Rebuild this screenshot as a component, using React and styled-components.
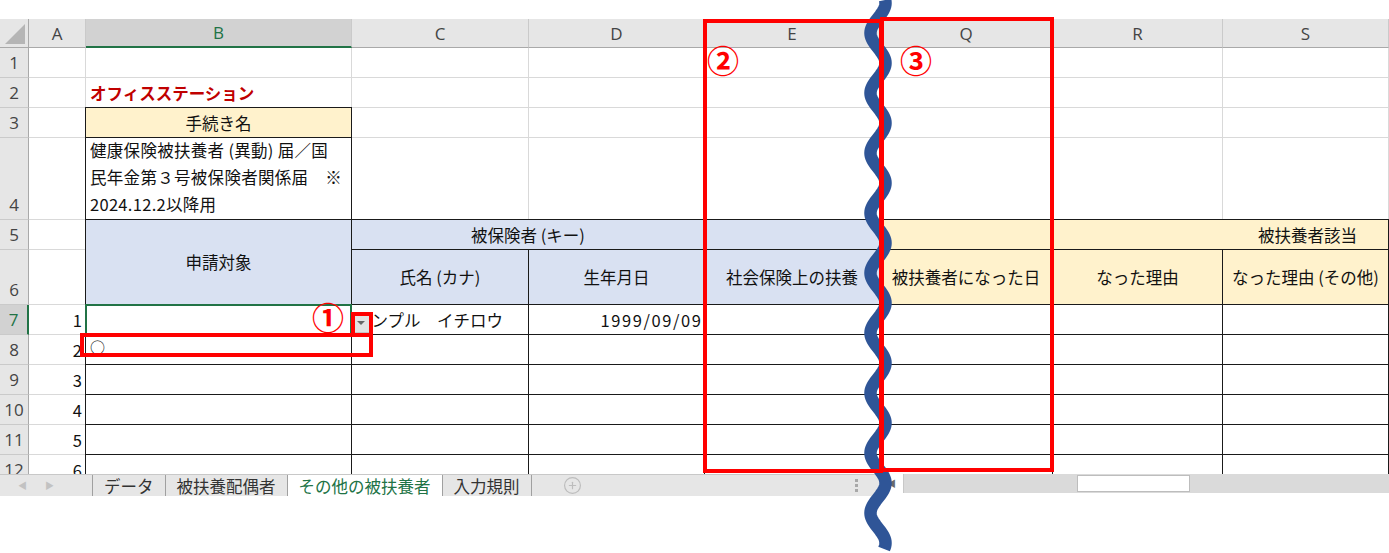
import React from 'react';
import styled, { createGlobalStyle, css } from 'styled-components';
import { CirclePlus } from 'lucide-react';

const GlobalStyle = createGlobalStyle`
  html, body {
    margin: 0;
    padding: 0;
    background: #fff;
  }
  body {
    font-family: "Noto Sans CJK JP", "Noto Sans", sans-serif;
  }
`;

const Page = styled.div`
  position: relative;
  width: 1389px;
  height: 553px;
  padding-top: 19px;
  box-sizing: border-box;
  overflow: hidden;
  background: #fff;
`;

const Viewport = styled.div`
  height: 455px;
  overflow: hidden;
`;

const Grid = styled.div`
  display: grid;
  grid-template-columns: 29px 57px 266px 177px 176px 175px 173px 170px 166px;
  grid-template-rows: 29px 30px 30px 30px 82px 30px 55px 30px 30px 30px 30px 30px 30px;
`;

const Corner = styled.div`
  position: relative;
  background: #e6e6e6;
  border-right: 1px solid #a9a9a9;
  border-bottom: 1px solid #a9a9a9;
  box-sizing: border-box;
`;

const CornerMark = styled.svg`
  position: absolute;
  right: 3px;
  bottom: 3px;
`;

const ColHead = styled.div`
  display: flex;
  align-items: center;
  justify-content: center;
  box-sizing: border-box;
  background: ${({ $active }) => ($active ? '#d2d2d2' : '#e6e6e6')};
  border-right: 1px solid #cacaca;
  border-bottom: ${({ $active }) => ($active ? '2px solid #217346' : '1px solid #a9a9a9')};
  color: ${({ $active }) => ($active ? '#217346' : '#444')};
  font-family: "Open Sans", "Noto Sans", sans-serif;
  font-size: 17px;
`;

const RowHead = styled.div`
  display: flex;
  align-items: flex-end;
  justify-content: center;
  padding-bottom: 3px;
  box-sizing: border-box;
  background: ${({ $active }) => ($active ? '#d2d2d2' : '#e6e6e6')};
  border-right: ${({ $active }) => ($active ? '2px solid #217346' : '1px solid #a9a9a9')};
  border-bottom: 1px solid #cacaca;
  color: ${({ $active }) => ($active ? '#217346' : '#444')};
  font-family: "Open Sans", "Noto Sans", sans-serif;
  font-size: 17px;
  line-height: 22px;
`;

const justify = { left: 'flex-start', center: 'center', right: 'flex-end' };

const Cell = styled.div`
  display: flex;
  align-items: ${({ $valign }) => $valign || 'center'};
  justify-content: ${({ $align }) => justify[$align || 'left']};
  padding: ${({ $pad }) => $pad || '0 4px'};
  box-sizing: border-box;
  min-width: 0;
  overflow: hidden;
  white-space: nowrap;
  background: ${({ $bg }) => $bg || '#fff'};
  border-right: 1px solid #d9d9d9;
  border-bottom: 1px solid #d9d9d9;
  color: #111;
  font-size: 16.5px;
  grid-column: ${({ $span }) => ($span ? `span ${$span}` : 'auto')};
  grid-row: ${({ $rows }) => ($rows ? `span ${$rows}` : 'auto')};
  ${({ $boxed }) =>
    $boxed &&
    css`
      position: relative;
      z-index: 1;
      margin: -1px 0 0 -1px;
      border: 1px solid #1a1a1a;
    `}
  ${({ $selected }) =>
    $selected &&
    css`
      position: relative;
      z-index: 2;
      margin: -1px 0 0 -1px;
      border: 2px solid #217346;
    `}
`;

const Brand = styled.span`
  color: #c00000;
  font-weight: 700;
  font-size: 16.5px;
`;

const Notes = styled.div`
  white-space: pre;
  line-height: 27px;
  letter-spacing: 0.3px;
`;

const DateText = styled.span`
  letter-spacing: 1.6px;
  margin-right: -1.6px;
`;

const Circle = styled.span`
  font-size: 15px;
  margin-bottom: 6px;
`;

const TabBar = styled.div`
  display: flex;
  height: 22px;
`;

const SheetTabs = styled.div`
  flex: none;
  width: 880px;
  display: flex;
  align-items: stretch;
  background: #e6e6e6;
  border-top: 1px solid #c8c8c8;
  box-sizing: border-box;
`;

const NavArrows = styled.div`
  width: 92px;
  display: flex;
  align-items: center;
  gap: 18px;
  padding-left: 18px;
  box-sizing: border-box;
  color: #c2c2c2;
  font-size: 9px;
`;

const Tab = styled.div`
  display: flex;
  align-items: center;
  padding: 0 11px;
  border-left: 1px solid #a0a0a0;
  background: ${({ $active }) => ($active ? '#fff' : 'transparent')};
  color: ${({ $active }) => ($active ? '#217346' : '#333')};
  font-size: 16.5px;
  line-height: 20px;
`;

const TabEnd = styled.div`
  width: 31px;
  border-left: 1px solid #a0a0a0;
`;

const AddSheet = styled.div`
  display: flex;
  align-items: center;
  color: #bdbdbd;
`;

const Grip = styled.div`
  margin-left: auto;
  margin-right: 22px;
  display: flex;
  flex-direction: column;
  justify-content: center;
  gap: 2px;

  span {
    width: 3px;
    height: 3px;
    background: #a8a8a8;
  }
`;

const HScroll = styled.div`
  flex: 1;
  height: 19px;
  display: flex;
  align-items: center;
  background: #dadada;
`;

const ScrollButton = styled.div`
  width: 24px;
  height: 19px;
  display: flex;
  align-items: center;
  justify-content: center;
  background: #fff;
  border-right: 1px solid #c8c8c8;
  box-sizing: border-box;
  color: #6a6a6a;
  font-size: 9px;
`;

const Thumb = styled.div`
  margin-left: 173px;
  width: 113px;
  height: 17px;
  background: #fff;
  border: 1px solid #bdbdbd;
  box-sizing: border-box;
`;

const DropButton = styled.div`
  position: absolute;
  left: 352px;
  top: 313px;
  z-index: 4;
  width: 18px;
  height: 20px;
  display: flex;
  align-items: center;
  justify-content: center;
  background: #e2e2e2;
  border: 1px solid #c4c4c4;
  box-sizing: border-box;

  &::after {
    content: '';
    border-left: 4px solid transparent;
    border-right: 4px solid transparent;
    border-top: 4px solid #666;
  }
`;

const Wave = styled.svg`
  position: absolute;
  left: 855px;
  top: 0;
  z-index: 5;
  pointer-events: none;
`;

const Mark = styled.div`
  position: absolute;
  z-index: 6;
  border: 4px solid #ff0000;
  box-sizing: border-box;
  pointer-events: none;
`;

const Label = styled.span`
  position: absolute;
  z-index: 7;
  color: #ff0000;
  font-family: "Noto Sans CJK JP", sans-serif;
  font-weight: 700;
  font-size: 32px;
  line-height: 1;
`;

const BLUE = '#d9e1f2';
const YELLOW = '#fff2cc';

const columns = ['A', 'B', 'C', 'D', 'E', 'Q', 'R', 'S'];

const dataRows = [
  { n: 1, name: 'サンプル\u3000イチロウ', birth: '1999/09/09', selected: true },
  { n: 2, mark: '○' },
  { n: 3 },
  { n: 4 },
  { n: 5 },
  { n: 6 },
];

const wavePath = (() => {
  const pts = [];
  for (let y = 0; y <= 549; y += 1.5) {
    const x = 23 + 7.5 * Math.cos((2 * Math.PI * (y - 3)) / 60);
    pts.push(`${x.toFixed(2)},${y.toFixed(1)}`);
  }
  return `M${pts.join(' L')}`;
})();

const Blank = ({ count }) =>
  Array.from({ length: count }, (_, i) => <Cell key={i} />);

const App = () => (
  <Page>
    <GlobalStyle />
    <Viewport>
      <Grid>
        <Corner>
          <CornerMark width="20" height="20" viewBox="0 0 20 20">
            <polygon points="20,0 20,20 0,20" fill="#b5b5b5" />
          </CornerMark>
        </Corner>
        {columns.map((c) => (
          <ColHead key={c} $active={c === 'B'}>
            {c}
          </ColHead>
        ))}

        <RowHead>1</RowHead>
        <Blank count={8} />

        <RowHead>2</RowHead>
        <Cell />
        <Cell>
          <Brand>オフィスステーション</Brand>
        </Cell>
        <Blank count={6} />

        <RowHead>3</RowHead>
        <Cell />
        <Cell $boxed $bg={YELLOW} $align="center">
          手続き名
        </Cell>
        <Blank count={6} />

        <RowHead>4</RowHead>
        <Cell />
        <Cell $boxed $valign="flex-end" $pad="0 4px 1px">
          <Notes>
            {'健康保険被扶養者 (異動) 届／国\n民年金第３号被保険者関係届\u3000※\n2024.12.2以降用'}
          </Notes>
        </Cell>
        <Blank count={6} />

        <RowHead>5</RowHead>
        <Cell />
        <Cell $boxed $rows={2} $bg={BLUE} $align="center">
          申請対象
        </Cell>
        <Cell $boxed $span={2} $bg={BLUE} $align="center">
          被保険者 (キー)
        </Cell>
        <Cell $boxed $bg={BLUE} />
        <Cell $boxed $span={3} $bg={YELLOW} $align="right" $pad="0 31px 0 4px">
          被扶養者該当
        </Cell>

        <RowHead>6</RowHead>
        <Cell />
        <Cell $boxed $bg={BLUE} $align="center">
          氏名 (カナ)
        </Cell>
        <Cell $boxed $bg={BLUE} $align="center">
          生年月日
        </Cell>
        <Cell $boxed $bg={BLUE} $align="center">
          社会保険上の扶養
        </Cell>
        <Cell $boxed $bg={YELLOW} $align="center">
          被扶養者になった日
        </Cell>
        <Cell $boxed $bg={YELLOW} $align="center">
          なった理由
        </Cell>
        <Cell $boxed $bg={YELLOW} $align="center">
          なった理由 (その他)
        </Cell>

        {dataRows.map((r) => (
          <React.Fragment key={r.n}>
            <RowHead $active={r.selected}>{r.n + 6}</RowHead>
            <Cell $align="right" $pad="0 3px 0 4px">
              {r.n}
            </Cell>
            {r.selected ? (
              <Cell $selected />
            ) : (
              <Cell $boxed>{r.mark && <Circle>{r.mark}</Circle>}</Cell>
            )}
            <Cell $boxed $pad="0 3px">
              {r.name}
            </Cell>
            <Cell $boxed $align="right" $pad="0 3px">
              {r.birth && <DateText>{r.birth}</DateText>}
            </Cell>
            <Cell $boxed />
            <Cell $boxed />
            <Cell $boxed />
            <Cell $boxed />
          </React.Fragment>
        ))}
      </Grid>
    </Viewport>

    <TabBar>
      <SheetTabs>
        <NavArrows>
          <span>◀</span>
          <span>▶</span>
        </NavArrows>
        <Tab>データ</Tab>
        <Tab>被扶養配偶者</Tab>
        <Tab $active>その他の被扶養者</Tab>
        <Tab>入力規則</Tab>
        <TabEnd />
        <AddSheet>
          <CirclePlus size={19} strokeWidth={1.5} />
        </AddSheet>
        <Grip>
          <span />
          <span />
          <span />
        </Grip>
      </SheetTabs>
      <HScroll>
        <ScrollButton>◀</ScrollButton>
        <Thumb />
      </HScroll>
    </TabBar>

    <DropButton />

    <Wave width="46" height="553" viewBox="0 0 46 553">
      <path d={wavePath} fill="none" stroke="#2f5597" strokeWidth="12.5" />
    </Wave>

    <Mark style={{ left: 703, top: 19, width: 180, height: 454 }} />
    <Mark style={{ left: 880, top: 17, width: 174, height: 455 }} />
    <Mark style={{ left: 80, top: 333, width: 293, height: 24 }} />
    <Mark style={{ left: 351, top: 312, width: 22, height: 25 }} />

    <Label style={{ left: 312, top: 300 }}>①</Label>
    <Label style={{ left: 707, top: 43 }}>②</Label>
    <Label style={{ left: 900, top: 43 }}>③</Label>
  </Page>
);

export default App;
